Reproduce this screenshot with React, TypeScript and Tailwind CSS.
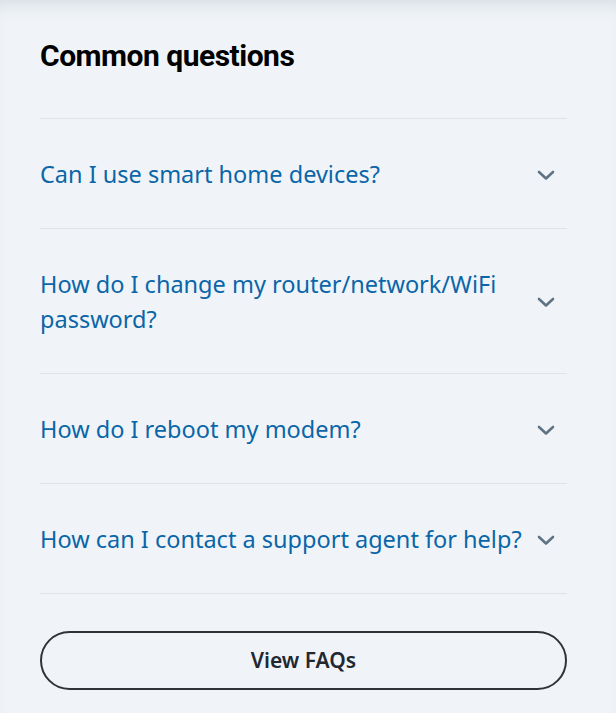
const QUESTIONS = [
  'Can I use smart home devices?',
  'How do I change my router/network/WiFi password?',
  'How do I reboot my modem?',
  'How can I contact a support agent for help?',
]

function Chevron() {
  return (
    <svg width="24" height="24" viewBox="0 0 24 24" fill="none" stroke="currentColor" strokeWidth="2.6" strokeLinecap="round" strokeLinejoin="round">
      <polyline points="5 9 12 15.5 19 9" />
    </svg>
  )
}

export default function App() {
  return (
    <div className="min-h-[713px] w-[616px] bg-[#f0f4f8] shadow-[inset_0_14px_18px_-12px_rgba(120,130,145,0.25)] font-['Noto_Sans',sans-serif]">
      <div className="pl-10 pr-[49px] pt-[35px] pb-6">
        {/* ── Heading ─────────────────────────────── */}
        <h2 className="font-['Roboto',sans-serif] text-[30px] font-bold leading-[42px] tracking-[-0.5px] text-black mb-[41px]">
          Common questions
        </h2>

        {/* ── Question list ───────────────────────── */}
        <ul className="border-t border-[#dfe3e8]">
          {QUESTIONS.map((q) => (
            <li key={q} className="border-b border-[#dfe3e8]">
              <button className="w-full flex items-center justify-between gap-2 pt-[38px] pb-[36px] text-left">
                <span className="text-[23.5px] leading-[35px] text-[#0a66a8]">{q}</span>
                <span className="text-[#5f7384] mr-[9px] shrink-0">
                  <Chevron />
                </span>
              </button>
            </li>
          ))}
        </ul>

        {/* ── CTA ─────────────────────────────────── */}
        <button className="mt-[37px] w-full h-[59px] rounded-full border-2 border-[#2f3338] text-[21px] font-semibold text-[#222831]">
          View FAQs
        </button>
      </div>
    </div>
  )
}
